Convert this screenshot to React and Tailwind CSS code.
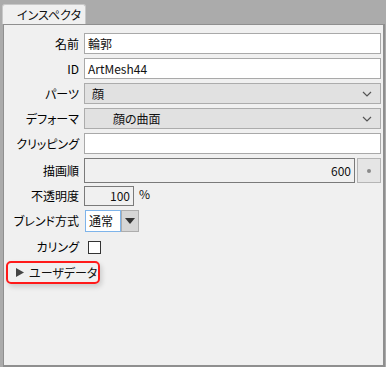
import React from "react";

const font = { fontFamily: '"Noto Sans CJK JP", "Noto Sans", sans-serif' };

// ラベル列
const Label = ({ children }) => (
  <div className="w-[80px] shrink-0 pr-[5px] text-right text-[12px] leading-none text-black whitespace-nowrap">{children}</div>
);

const Chevron = () => (
  <svg width="10" height="6" viewBox="0 0 10 6" className="shrink-0">
    <path d="M1 1 L5 5 L9 1" fill="none" stroke="#555" strokeWidth="1.2" />
  </svg>
);

export default function App() {
  return (
    <div
      className="w-[386px] h-[367px] bg-[#ababab] pt-[4px] overflow-hidden leading-none [font-feature-settings:'palt'] text-[#111]"
      style={font}
    >
      {/* タブ */}
      <div className="ml-[2px] w-[84px] h-[20px] bg-[#f0f0f0] rounded-t-[3px] border-t border-x border-[#c8c8c8] pl-[14px] flex items-center text-[12px] whitespace-nowrap">
        インスペクタ
      </div>

      {/* パネル本体 */}
      <div className="ml-[3px] w-[382px] h-[343px] bg-[#f0f0f0] border border-[#8f8f8f] border-r-[2px] border-b-[2px] pt-[8px] pr-[2px] flex flex-col">
        <div className="flex items-center h-[21px]">
          <Label>名前</Label>
          <div className="flex-1 h-full bg-white border border-[#a9a9a9] px-[3px] flex items-center text-[12px]">輪郭</div>
        </div>

        <div className="flex items-center h-[21px] mt-[4px]">
          <Label>ID</Label>
          <div className="flex-1 h-full bg-white border border-[#a9a9a9] px-[3px] flex items-center text-[12px]">ArtMesh44</div>
        </div>

        <div className="flex items-center h-[21px] mt-[4px]">
          <Label>パーツ</Label>
          <div className="flex-1 h-full bg-[#e1e1e1] border border-[#acacac] pl-[7px] pr-[8px] flex items-center justify-between text-[12px]">
            <span>顔</span>
            <Chevron />
          </div>
        </div>

        <div className="flex items-center h-[21px] mt-[4px]">
          <Label>デフォーマ</Label>
          <div className="flex-1 h-full bg-[#e1e1e1] border border-[#acacac] pl-[28px] pr-[8px] flex items-center justify-between text-[12px]">
            <span>顔の曲面</span>
            <Chevron />
          </div>
        </div>

        <div className="flex items-center h-[21px] mt-[4px]">
          <Label>クリッピング</Label>
          <div className="flex-1 h-full bg-white border border-[#a9a9a9]" />
        </div>

        <div className="flex items-center h-[25px] mt-[4px]">
          <Label>描画順</Label>
          <div className="flex-1 h-full bg-[#f0f0f0] border border-[#7a7a7a] px-[3px] flex items-center justify-end text-[12px]">600</div>
          <div className="w-[24px] h-full ml-[2px] bg-[#e5e5e5] border border-[#b5b5b5] flex items-center justify-center">
            <div className="w-[4px] h-[4px] rounded-full bg-[#8a8a8a]" />
          </div>
        </div>

        <div className="flex items-center h-[20px] mt-[3px]">
          <Label>不透明度</Label>
          <div className="w-[50px] h-full bg-[#f0f0f0] border border-[#7a7a7a] px-[3px] flex items-center justify-end text-[12px]">100</div>
          <span className="ml-[5px] text-[12px] -mt-[4px]">%</span>
        </div>

        <div className="flex items-center h-[22px] mt-[4px]">
          <Label>ブレンド方式</Label>
          <div className="w-[36px] h-full bg-white border border-[#7eb4ea] px-[3px] flex items-center text-[12px] ml-[1px]">通常</div>
          <div className="w-[18px] h-full bg-[#d6d6d6] border border-[#adadad] flex items-center justify-center">
            <svg width="10" height="6" viewBox="0 0 10 6">
              <path d="M0 0 H10 L5 6 Z" fill="#333" />
            </svg>
          </div>
        </div>

        <div className="flex items-center h-[14px] mt-[8px]">
          <Label>カリング</Label>
          <div className="w-[13px] h-[13px] ml-[4px] bg-white border border-[#333]" />
        </div>

        {/* ユーザデータ */}
        <div className="mt-[7px] ml-[2px] w-[94px] h-[23px] rounded-[5px] border-2 border-[#ff1a1a] shadow-[2px_3px_5px_rgba(0,0,0,0.15)] flex items-center pl-[8px] text-[12px] whitespace-nowrap">
          <svg width="8" height="9" viewBox="0 0 8 9" className="mr-[5px] shrink-0">
            <path d="M0 0 L8 4.5 L0 9 Z" fill="#444" />
          </svg>
          ユーザデータ
        </div>
      </div>
    </div>
  );
}
